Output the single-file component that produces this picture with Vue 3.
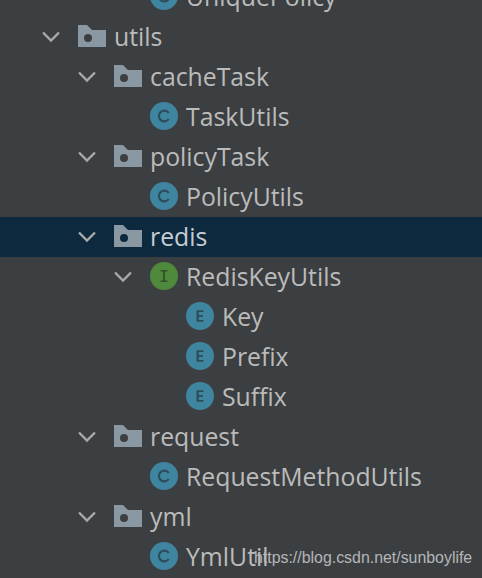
<script setup>
const rows = [
  { name: 'UniquePolicy', depth: 2, icon: 'c' },
  { name: 'utils', depth: 0, icon: 'folder', open: true },
  { name: 'cacheTask', depth: 1, icon: 'folder', open: true },
  { name: 'TaskUtils', depth: 2, icon: 'c' },
  { name: 'policyTask', depth: 1, icon: 'folder', open: true },
  { name: 'PolicyUtils', depth: 2, icon: 'c' },
  { name: 'redis', depth: 1, icon: 'folder', open: true, selected: true },
  { name: 'RedisKeyUtils', depth: 2, icon: 'i', open: true },
  { name: 'Key', depth: 3, icon: 'e' },
  { name: 'Prefix', depth: 3, icon: 'e' },
  { name: 'Suffix', depth: 3, icon: 'e' },
  { name: 'request', depth: 1, icon: 'folder', open: true },
  { name: 'RequestMethodUtils', depth: 2, icon: 'c' },
  { name: 'yml', depth: 1, icon: 'folder', open: true },
  { name: 'YmlUtil', depth: 2, icon: 'c' },
]
</script>

<template>
  <div class="tree">
    <div
      v-for="row in rows"
      :key="row.name"
      class="row"
      :class="{ selected: row.selected }"
      :style="{ paddingLeft: 39 + row.depth * 36 + 'px' }"
    >
      <span class="arrow">
        <svg v-if="row.open" width="24" height="14" viewBox="0 0 24 14">
          <path d="M4 2.5 L12 10.5 L20 2.5" fill="none" stroke="#a7a9ab" stroke-width="2.4" />
        </svg>
      </span>
      <svg v-if="row.icon === 'folder'" class="icon" width="28" height="22" viewBox="0 0 28 22">
        <path d="M0 0 H9 L14 5 H28 V22 H0 Z" fill="#8a98a3" />
        <circle cx="10" cy="13" r="4" :fill="row.selected ? '#0d293e' : '#3c3f41'" />
      </svg>
      <svg v-else class="icon" width="28" height="28" viewBox="0 0 28 28">
        <circle cx="14" cy="14" r="14" :fill="row.icon === 'i' ? '#4f8a3c' : '#40859f'" />
        <path v-if="row.icon === 'c'" d="M18.8 11 A5.4 5.4 0 1 0 18.8 17" fill="none" stroke="#2b4e5c" stroke-width="2.2" />
        <path v-if="row.icon === 'e'" d="M10.5 8.2 H17.5 V10 H12.8 V13 H17 V14.8 H12.8 V18 H17.5 V19.8 H10.5 Z" fill="#2b4e5c" />
        <path v-if="row.icon === 'i'" d="M10.5 8 H17.5 V9.6 H14.9 V18.4 H17.5 V20 H10.5 V18.4 H13.1 V9.6 H10.5 Z" fill="#34502b" />
      </svg>
      <span class="name">{{ row.name }}</span>
    </div>
    <span class="mark">https://blog.csdn.net/sunboylife</span>
  </div>
</template>

<style scoped>
.tree {
  position: relative;
  height: 578px;
  overflow: hidden;
  background: #3c3f41;
  font-family: "Open Sans", "Noto Sans", sans-serif;
}

.row {
  display: flex;
  align-items: center;
  height: 40px;
  box-sizing: border-box;
}

.row:first-child {
  margin-top: -23px;
}

.row.selected {
  background: #0d293e;
}

.arrow {
  display: flex;
  align-items: center;
  width: 39px;
  flex: none;
}

.icon {
  flex: none;
  margin-top: -2px;
}

.name {
  margin-left: 8px;
  margin-top: -2px;
  font-size: 24.8px;
  color: #bbbbbb;
  line-height: 40px;
  white-space: nowrap;
}

.selected .name {
  color: #c4cdd3;
}

.mark {
  position: absolute;
  left: 254px;
  top: 549px;
  font-family: "Liberation Sans", Arial, sans-serif;
  font-size: 15.9px;
  line-height: 18px;
  color: #b4b6b8;
  white-space: nowrap;
}
</style>
